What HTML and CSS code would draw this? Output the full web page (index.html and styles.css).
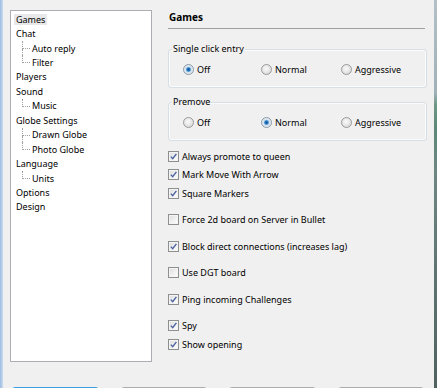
FILE: index.html
```html
<!DOCTYPE html>
<html>
<head>
<meta charset="utf-8">
<link rel="stylesheet" href="styles.css">
</head>
<body>
<div class="window">
  <div class="frame-left"></div>
  <div class="client">
    <div class="top">
      <ul class="tree">
        <li class="node"><span class="lbl sel">Games</span></li>
        <li class="node"><span class="lbl">Chat</span>
          <ul class="kids">
            <li class="kid"><span class="lbl">Auto reply</span></li>
            <li class="kid"><span class="lbl">Filter</span></li>
          </ul>
        </li>
        <li class="node"><span class="lbl">Players</span></li>
        <li class="node"><span class="lbl">Sound</span>
          <ul class="kids">
            <li class="kid"><span class="lbl">Music</span></li>
          </ul>
        </li>
        <li class="node"><span class="lbl">Globe Settings</span>
          <ul class="kids">
            <li class="kid"><span class="lbl">Drawn Globe</span></li>
            <li class="kid"><span class="lbl">Photo Globe</span></li>
          </ul>
        </li>
        <li class="node"><span class="lbl">Language</span>
          <ul class="kids">
            <li class="kid"><span class="lbl">Units</span></li>
          </ul>
        </li>
        <li class="node"><span class="lbl">Options</span></li>
        <li class="node"><span class="lbl">Design</span></li>
      </ul>

      <div class="panel">
        <div class="heading">Games</div>
        <div class="rule"></div>

        <div class="group group-first">
          <div class="group-label">Single click entry</div>
          <div class="radios">
            <label class="radio"><span class="dot on"></span>Off</label>
            <label class="radio"><span class="dot"></span>Normal</label>
            <label class="radio"><span class="dot"></span>Aggressive</label>
          </div>
        </div>

        <div class="group group-second">
          <div class="group-label">Premove</div>
          <div class="radios">
            <label class="radio"><span class="dot"></span>Off</label>
            <label class="radio"><span class="dot on"></span>Normal</label>
            <label class="radio"><span class="dot"></span>Aggressive</label>
          </div>
        </div>

        <div class="checks">
          <label class="check"><span class="box on"><svg viewBox="0 0 11 11"><path d="M2.8 5.6 L4.7 7.7 L8.4 2.8"/></svg></span>Always promote to queen</label>
          <label class="check"><span class="box on"><svg viewBox="0 0 11 11"><path d="M2.8 5.6 L4.7 7.7 L8.4 2.8"/></svg></span>Mark Move With Arrow</label>
          <label class="check"><span class="box on"><svg viewBox="0 0 11 11"><path d="M2.8 5.6 L4.7 7.7 L8.4 2.8"/></svg></span>Square Markers</label>
          <label class="check sep"><span class="box"></span>Force 2d board on Server in Bullet</label>
          <label class="check sep"><span class="box on"><svg viewBox="0 0 11 11"><path d="M2.8 5.6 L4.7 7.7 L8.4 2.8"/></svg></span>Block direct connections (increases lag)</label>
          <label class="check sep"><span class="box"></span>Use DGT board</label>
          <label class="check sep"><span class="box on"><svg viewBox="0 0 11 11"><path d="M2.8 5.6 L4.7 7.7 L8.4 2.8"/></svg></span>Ping incoming Challenges</label>
          <label class="check sep"><span class="box on"><svg viewBox="0 0 11 11"><path d="M2.8 5.6 L4.7 7.7 L8.4 2.8"/></svg></span>Spy</label>
          <label class="check"><span class="box on"><svg viewBox="0 0 11 11"><path d="M2.8 5.6 L4.7 7.7 L8.4 2.8"/></svg></span>Show opening</label>
        </div>
      </div>
    </div>

    <div class="buttons">
      <button class="btn btn-default" aria-label="OK"></button>
      <button class="btn" aria-label="Cancel"></button>
      <button class="btn" aria-label="Apply"></button>
      <button class="btn" aria-label="Help"></button>
    </div>
  </div>
  <div class="frame-right"></div>
</div>
</body>
</html>
```
FILE: styles.css
```css
html, body {
  margin: 0;
  padding: 0;
  height: 388px;
  overflow: hidden;
  background: #f0f0f0;
}

body {
  font-family: "Noto Sans", "Open Sans", sans-serif;
  font-size: 9px;
  color: #000;
}

.window {
  display: flex;
  height: 388px;
  overflow: hidden;
}

.frame-left {
  width: 3px;
  flex: none;
  background: linear-gradient(to right, #9dbbdf, #b9d0ea 60%, #c9dbef);
}

.frame-right {
  width: 3px;
  flex: none;
  background: linear-gradient(to bottom, #b3c1c6 0%, #9fb1b7 24%, #6f9788 27%, #5d8777 33%, #6e8683 45%, #5f7472 70%, #4f6260 100%);
}

.client {
  flex: 1;
  display: flex;
  flex-direction: column;
  padding: 10px 0 0 7px;
  min-width: 0;
}

.top {
  display: flex;
  height: 352px;
  flex: none;
}

/* ---------- tree ---------- */
.tree {
  list-style: none;
  margin: 0;
  padding: 1px 0 0 0;
  width: 142px;
  height: 352px;
  box-sizing: border-box;
  border: 1px solid #abadb3;
  background: #fff;
}

.node {
  padding: 0;
}

.lbl {
  display: inline-block;
  height: 11px;
  line-height: 11px;
  padding: 0 2px;
  margin: 1.7px 0 1.75px 3px;
  vertical-align: top;
  white-space: nowrap;
}

.sel {
  background: #e8e8e8;
}

.kids {
  list-style: none;
  margin: 0;
  padding: 0;
}

.kid {
  position: relative;
  padding-left: 16px;
}

.kid::before {
  content: "";
  position: absolute;
  left: 11px;
  top: 0;
  width: 7px;
  height: 7px;
  border-left: 1px dotted #a0a0a0;
  border-bottom: 1px dotted #a0a0a0;
}

.kid:not(:last-child)::after {
  content: "";
  position: absolute;
  left: 11px;
  top: 8px;
  bottom: 0;
  border-left: 1px dotted #a0a0a0;
}

/* ---------- panel ---------- */
.panel {
  margin-left: 16px;
  width: 259px;
  display: flex;
  flex-direction: column;
}

.heading {
  font-size: 10px;
  font-weight: bold;
  line-height: 14px;
  height: 14px;
  padding-left: 1px;
}

.rule {
  margin-top: 4px;
  width: 257px;
  border-top: 1px solid #a0a0a0;
}

.group {
  position: relative;
  border: 1px solid #d5dfe5;
  border-radius: 3px;
  box-shadow: inset 0 0 0 1px #fbfbfb;
  padding: 12px 0 11px 14px;
}

.group-first {
  margin-top: 20px;
}

.group-second {
  margin-top: 14px;
}

.group-label {
  position: absolute;
  top: -8px;
  left: 3px;
  padding: 0 1px;
  line-height: 14px;
  background: #f0f0f0;
}

.radios {
  display: grid;
  grid-template-columns: 78px 80px auto;
  height: 14px;
}

.radio {
  display: flex;
  align-items: center;
  height: 14px;
  white-space: nowrap;
}

.dot {
  width: 11px;
  height: 11px;
  box-sizing: border-box;
  border-radius: 50%;
  border: 1px solid #9a9a9a;
  background: radial-gradient(circle at 45% 40%, #fafafa 0, #e8e8e8 45%, #d0d0d0 100%);
  margin-right: 3px;
  flex: none;
}

.dot.on {
  border-color: #8a9aa8;
  background: radial-gradient(circle at 50% 50%, #0b4a8e 0, #2a73b8 22%, #79b5e4 36%, #d8e4ee 48%, #e4e8ec 70%, #c8ccd0 100%);
}

.checks {
  margin-top: 6px;
  display: flex;
  flex-direction: column;
}

.check {
  display: flex;
  align-items: center;
  height: 18.5px;
  white-space: nowrap;
}

.check.sep {
  margin-top: 8px;
}

.box {
  width: 11px;
  height: 11px;
  box-sizing: border-box;
  border: 1px solid #8e8f8f;
  background: linear-gradient(135deg, #dcdcdc 0%, #f2f2f2 60%, #ffffff 100%);
  box-shadow: inset 0 0 0 1px #f4f4f4;
  margin-right: 3px;
  flex: none;
  position: relative;
}

.box svg {
  position: absolute;
  left: -1px;
  top: -1px;
  width: 11px;
  height: 11px;
}

.box path {
  fill: none;
  stroke: #4d62a0;
  stroke-width: 1.4;
}

/* ---------- buttons (only their top edge is inside the frame) ---------- */
.buttons {
  display: flex;
  gap: 22px;
  margin-top: 25px;
  padding-left: 2px;
  height: 2px;
  overflow: hidden;
  flex: none;
}

.btn {
  width: 86.5px;
  height: 23px;
  flex: none;
  box-sizing: border-box;
  border: 1px solid #acacac;
  border-radius: 3px;
  background: linear-gradient(#f2f2f2, #ebebeb 50%, #dddddd 51%, #cfcfcf);
  padding: 0;
}

.btn-default {
  border-color: #3c9ee0;
  box-shadow: inset 0 0 0 1px #8fd0f8;
  background: linear-gradient(#e5f4fc, #c4e5f6 50%, #98d1ef 51%, #68b3db);
}
```
